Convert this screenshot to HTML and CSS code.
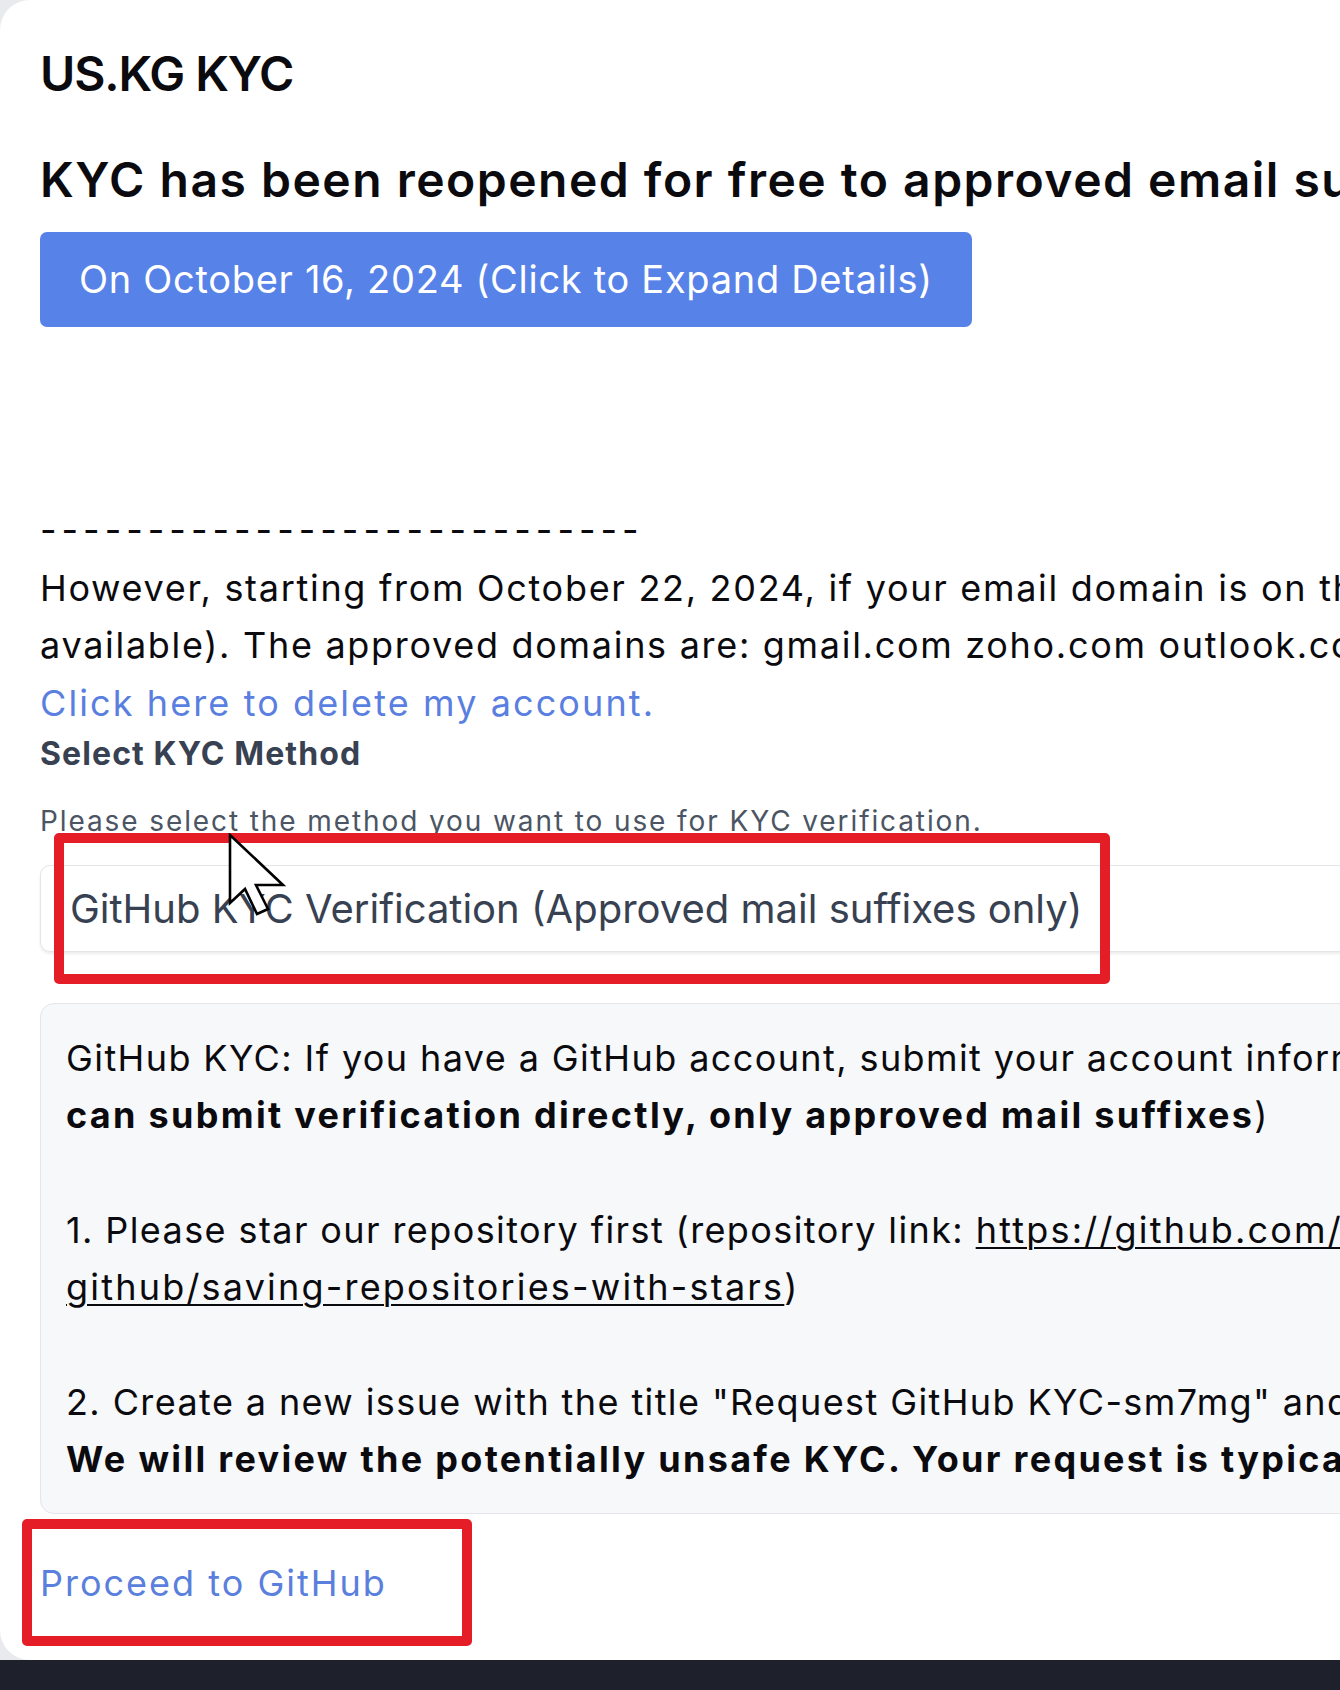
FILE: index.html
```html
<!DOCTYPE html>
<html lang="en">
<head>
<meta charset="utf-8">
<title>US.KG KYC</title>
<link rel="stylesheet" href="styles.css">
</head>
<body>
<div class="page">
  <main class="card">
    <h1 class="title">US.KG KYC</h1>
    <h2 class="headline">KYC has been reopened for free to approved email suffixes!</h2>
    <button class="expand" type="button">On October 16, 2024 (Click to Expand Details)</button>

    <div class="notice">
      <p class="dashes">----------------------------</p>
      <p class="text">However, starting from October 22, 2024, if your email domain is on the approved list, you can use GitHub KYC (only GitHub KYC is<br>available). The approved domains are: gmail.com zoho.com outlook.com hotmail.com protonmail.com yahoo.com icloud.com</p>
      <a class="link" href="#">Click here to delete my account.</a>
    </div>

    <h3 class="label">Select KYC Method</h3>
    <p class="hint">Please select the method you want to use for KYC verification.</p>

    <div class="select">GitHub KYC Verification (Approved mail suffixes only)</div>

    <div class="info">
      <p class="info-line">GitHub KYC: If you have a GitHub account, submit your account information to us for verification. (<b>No waiting, you</b></p>
      <p class="info-line"><b>can submit verification directly, only approved mail suffixes</b>)</p>
      <p class="info-line blank">&nbsp;</p>
      <p class="info-line">1. Please star our repository first (repository link: <u>https://github.com/SpectralOps/us.kg</u>, how to star: <u>https://docs.github.com/en/get-started/exploring-projects-on-</u></p>
      <p class="info-line"><u>github/saving-repositories-with-stars</u>)</p>
      <p class="info-line blank">&nbsp;</p>
      <p class="info-line">2. Create a new issue with the title "Request GitHub KYC-sm7mg" and the content containing your US.KG panel username.</p>
      <p class="info-line"><b>We will review the potentially unsafe KYC. Your request is typically processed within 24 hours.</b></p>
    </div>

    <a class="proceed" href="#">Proceed to GitHub</a>

    <div class="mark mark-select"></div>
    <div class="mark mark-proceed"></div>
    <svg class="cursor" width="58" height="84" viewBox="0 0 58 84" aria-hidden="true">
      <path d="M2 2 V70 L17 56 L29 81 L40 76 L28 52 H55 Z" fill="#fff" stroke="#000" stroke-width="2.6" stroke-linejoin="miter"/>
    </svg>
  </main>
  <footer class="bar"></footer>
</div>
</body>
</html>
```

FILE: styles.css
```css
html, body {
  margin: 0;
  padding: 0;
}

body {
  background: #e8eaee;
  font-family: "Inter", "Noto Sans", sans-serif;
  color: #0b0b0f;
}

.page {
  width: 1340px;
  height: 1690px;
  overflow: hidden;
  display: flex;
  flex-direction: column;
}

.card {
  position: relative;
  flex: 0 0 auto;
  width: 2200px;
  height: 1660px;
  box-sizing: border-box;
  background: #ffffff;
  border-radius: 30px 0 0 30px;
  padding: 45px 0 0 40px;
  white-space: nowrap;
}

.title {
  margin: 0;
  font-size: 48px;
  line-height: 57.6px;
  font-weight: 600;
  letter-spacing: -1.1px;
}

.headline {
  margin: 48px 0 0;
  font-size: 48px;
  line-height: 57.6px;
  font-weight: 600;
  letter-spacing: 1.5px;
}

.expand {
  display: block;
  margin-top: 24px;
  height: 95px;
  padding: 0 39px;
  border: 0;
  border-radius: 7px;
  background: #5782e8;
  color: #ffffff;
  font-family: inherit;
  font-size: 38px;
  line-height: 95px;
  font-weight: 400;
  letter-spacing: 0.7px;
}

.notice {
  margin-top: 175px;
  font-size: 36px;
  line-height: 57.5px;
  letter-spacing: 1.7px;
}

.notice p {
  margin: 0;
}

.dashes {
  letter-spacing: 5px;
}

.link {
  display: block;
  color: #5a7fe0;
  text-decoration: none;
  letter-spacing: 2.1px;
}

.label {
  margin: 0;
  font-size: 32px;
  line-height: 44px;
  font-weight: 700;
  color: #374151;
  letter-spacing: 1.1px;
}

.hint {
  margin: 25px 0 0;
  font-size: 28px;
  line-height: 40px;
  color: #4b5563;
  letter-spacing: 1.9px;
}

.select {
  margin-top: 24px;
  height: 87px;
  box-sizing: border-box;
  border: 1px solid #e3e5e9;
  border-radius: 10px;
  box-shadow: 0 2px 3px rgba(0, 0, 0, 0.08);
  padding-left: 29px;
  font-size: 40px;
  line-height: 85px;
  color: #374151;
}

.info {
  margin-top: 51px;
  height: 511px;
  box-sizing: border-box;
  border: 1px solid #e4e6ea;
  border-radius: 14px;
  background: #f7f8fa;
  padding: 26px 0 0 25px;
  font-size: 36px;
  line-height: 57.3px;
  letter-spacing: 1.4px;
}

.info-line {
  margin: 0;
}

.info b {
  font-weight: 700;
  letter-spacing: 2.3px;
}

.info u {
  text-underline-offset: 4px;
  text-decoration-thickness: 2px;
  letter-spacing: 2.2px;
}

.proceed {
  display: block;
  margin-top: 41px;
  font-size: 36px;
  line-height: 57.5px;
  color: #5a7fdc;
  text-decoration: none;
  letter-spacing: 2px;
}

.mark {
  position: absolute;
  box-sizing: border-box;
  border: 10px solid #e41d27;
  border-radius: 5px;
}

.mark-select {
  left: 54px;
  top: 833px;
  width: 1056px;
  height: 151px;
}

.mark-proceed {
  left: 22px;
  top: 1519px;
  width: 450px;
  height: 127px;
}

.cursor {
  position: absolute;
  left: 228px;
  top: 833px;
}

.bar {
  flex: 1 1 auto;
  background: #1e212c;
}
```
